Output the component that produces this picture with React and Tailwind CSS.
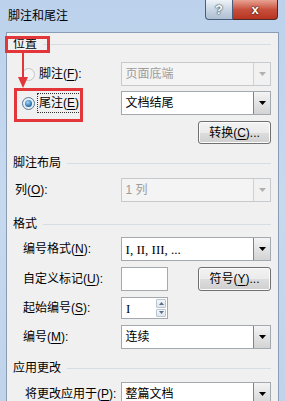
import React from 'react';

const font = { fontFamily: '"Liberation Sans", "Noto Sans CJK SC", sans-serif' };

const Arrow = ({ disabled }) => (
  <svg width="7" height="4" viewBox="0 0 7 4">
    <path d="M0 0 H7 L3.5 4 Z" fill={disabled ? '#b0b0b0' : '#000'} />
  </svg>
);

const Combo = ({ text, disabled, serif }) => (
  <div
    className={`flex h-full w-[151px] border ${
      disabled ? 'border-[#c7cacd] bg-[#f4f4f4]' : 'border-[#a4a9af] bg-white'
    }`}
  >
    <div
      className={`flex flex-1 items-center pl-[4px] ${
        disabled ? 'text-[#9c9c9c]' : 'text-black'
      } ${serif ? 'text-[13px] font-["Liberation_Serif",serif]' : ''}`}
    >
      {text}
    </div>
    <div
      className={`flex w-[17px] items-center justify-center border-l ${
        disabled
          ? 'border-[#cfd1d4] bg-[#f1f1f1]'
          : 'border-[#7f8388] bg-gradient-to-b from-[#f4f4f4] to-[#d3d3d3]'
      }`}
    >
      <Arrow disabled={disabled} />
    </div>
  </div>
);

const Button = ({ children }) => (
  <div className="flex h-full w-[73px] items-center justify-center rounded-[3px] border border-[#707070] bg-[linear-gradient(#f2f2f2_0%,#ebebeb_50%,#dddddd_51%,#cfcfcf_100%)] shadow-[inset_0_0_0_1px_#fcfcfc]">
    {children}
  </div>
);

const Header = ({ children }) => (
  <div className="flex h-[20px] items-center">
    <span>{children}</span>
    <div className="ml-[6px] h-px flex-1 bg-[#d5dce3]" />
  </div>
);

const U = ({ children }) => <span className="underline underline-offset-2">{children}</span>;

const Row = ({ label, indent = 'pl-[10px]', className, children }) => (
  <div className={`flex items-center ${className}`}>
    <div className={`flex h-full w-[108px] items-center ${indent}`}>{label}</div>
    {children}
  </div>
);

export default function App() {
  return (
    <div
      className="relative h-[401px] w-[285px] overflow-hidden bg-gradient-to-b from-[#bcd2ec] via-[#c6d9ef] to-[#bfd3ea] text-[12px] leading-none text-black"
      style={font}
    >
      {/* title bar */}
      <div className="flex h-[32px]">
        <div className="pl-[8px] pt-[10px]">脚注和尾注</div>
        <div className="ml-auto mr-[7px] flex h-[20px]">
          <div className="flex w-[28px] items-center justify-center rounded-bl-[4px] border border-t-0 border-[#4a5d7a] bg-gradient-to-b from-[#eef3f8] via-[#c9d6e4] to-[#aebfd3] text-[13px] font-bold text-white [text-shadow:0_0_2px_#233,0_0_1px_#233]">
            ?
          </div>
          <div className="flex w-[45px] items-center justify-center rounded-br-[4px] border border-l-0 border-t-0 border-[#4a2a2a] bg-gradient-to-b from-[#e8a293] via-[#c7503d] to-[#b8321f] text-[13px] font-bold text-white [text-shadow:0_0_2px_#311,0_0_1px_#311]">
            x
          </div>
        </div>
      </div>

      {/* client area */}
      <div className="ml-[6px] mr-[6px] h-[400px] border border-[#8a9cb3] bg-[#f0f0f0] pl-[6px] pr-[7px]">
        <div className="mt-[1px]">
          <Header>位置</Header>
        </div>

        <Row
          className="mt-[8px] h-[24px]"
          indent="pl-[9px]"
          label={
            <div className="flex items-center">
              <div className="h-[13px] w-[13px] rounded-full border border-[#c2c4c6] bg-[#f4f4f4]" />
              <span className="ml-[4px]">
                脚注(<U>F</U>):
              </span>
            </div>
          }
        >
          <Combo text="页面底端" disabled />
        </Row>

        <Row
          className="mt-[5px] h-[24px]"
          indent="pl-[9px]"
          label={
            <div className="flex items-center">
              <div className="flex h-[13px] w-[13px] items-center justify-center rounded-full border border-[#56789a] bg-[#e6eef6]">
                <div className="h-[7px] w-[7px] rounded-full bg-[radial-gradient(circle_at_40%_35%,#9fd8ff,#1d5f9c_75%)]" />
              </div>
              <span className="ml-[2px] border border-dotted border-[#333] px-[1px] py-[3px]">
                尾注(<U>E</U>)
              </span>
            </div>
          }
        >
          <Combo text="文档结尾" />
        </Row>

        <div className="mt-[6px] flex h-[23px] justify-end">
          <Button>
            转换(<U>C</U>)...
          </Button>
        </div>

        <div className="mt-[9px]">
          <Header>脚注布局</Header>
        </div>

        <Row className="mt-[5px] h-[24px]" indent="pl-[2px]" label={<span>列(<U>O</U>):</span>}>
          <Combo text="1 列" disabled />
        </Row>

        <div className="mt-[12px]">
          <Header>格式</Header>
        </div>

        <Row className="mt-[3px] h-[24px]" label={<span>编号格式(<U>N</U>):</span>}>
          <Combo text="I, II, III, ..." serif />
        </Row>

        <Row className="mt-[6px] h-[24px]" label={<span>自定义标记(<U>U</U>):</span>}>
          <div className="h-full w-[47px] border border-[#a4a9af] bg-white" />
          <div className="ml-auto h-full">
            <Button>
              符号(<U>Y</U>)...
            </Button>
          </div>
        </Row>

        <Row className="mt-[6px] h-[22px]" label={<span>起始编号(<U>S</U>):</span>}>
          <div className="flex h-full w-[47px] border border-[#a4a9af] bg-white">
            <div className='flex flex-1 items-center pl-[4px] font-["Liberation_Serif",serif] text-[13px]'>I</div>
            <div className="flex w-[12px] flex-col gap-px p-px">
              <div className="flex flex-1 items-center justify-center rounded-[1px] border border-[#b9c5d3] bg-gradient-to-b from-[#f3f6f9] to-[#dfe6ee]">
                <svg width="5" height="3" viewBox="0 0 5 3">
                  <path d="M0 3 L2.5 0 L5 3 Z" fill="#5a6d84" />
                </svg>
              </div>
              <div className="flex flex-1 items-center justify-center rounded-[1px] border border-[#b9c5d3] bg-gradient-to-b from-[#f3f6f9] to-[#dfe6ee]">
                <svg width="5" height="3" viewBox="0 0 5 3">
                  <path d="M0 0 H5 L2.5 3 Z" fill="#5a6d84" />
                </svg>
              </div>
            </div>
          </div>
        </Row>

        <Row className="mt-[6px] h-[24px]" label={<span>编号(<U>M</U>):</span>}>
          <Combo text="连续" />
        </Row>

        <div className="mt-[9px]">
          <Header>应用更改</Header>
        </div>

        <Row className="mt-[4px] h-[24px]" indent="pl-[12px]" label={<span>将更改应用于(<U>P</U>):</span>}>
          <Combo text="整篇文档" />
        </Row>
      </div>

      {/* red annotations */}
      <div className="absolute left-[5px] top-[36px] h-[17px] w-[45px] border-[3px] border-[#e2363a]" />
      <div className="absolute left-[14px] top-[88px] h-[34px] w-[69px] border-[3px] border-[#e2363a]" />
      <svg className="absolute left-[17px] top-[52px]" width="12" height="37" viewBox="0 0 12 37">
        <rect x="5" y="0" width="2" height="27" fill="#e2363a" />
        <path d="M1 25 L11 25 L6 36 Z" fill="#e2363a" />
      </svg>
    </div>
  );
}
